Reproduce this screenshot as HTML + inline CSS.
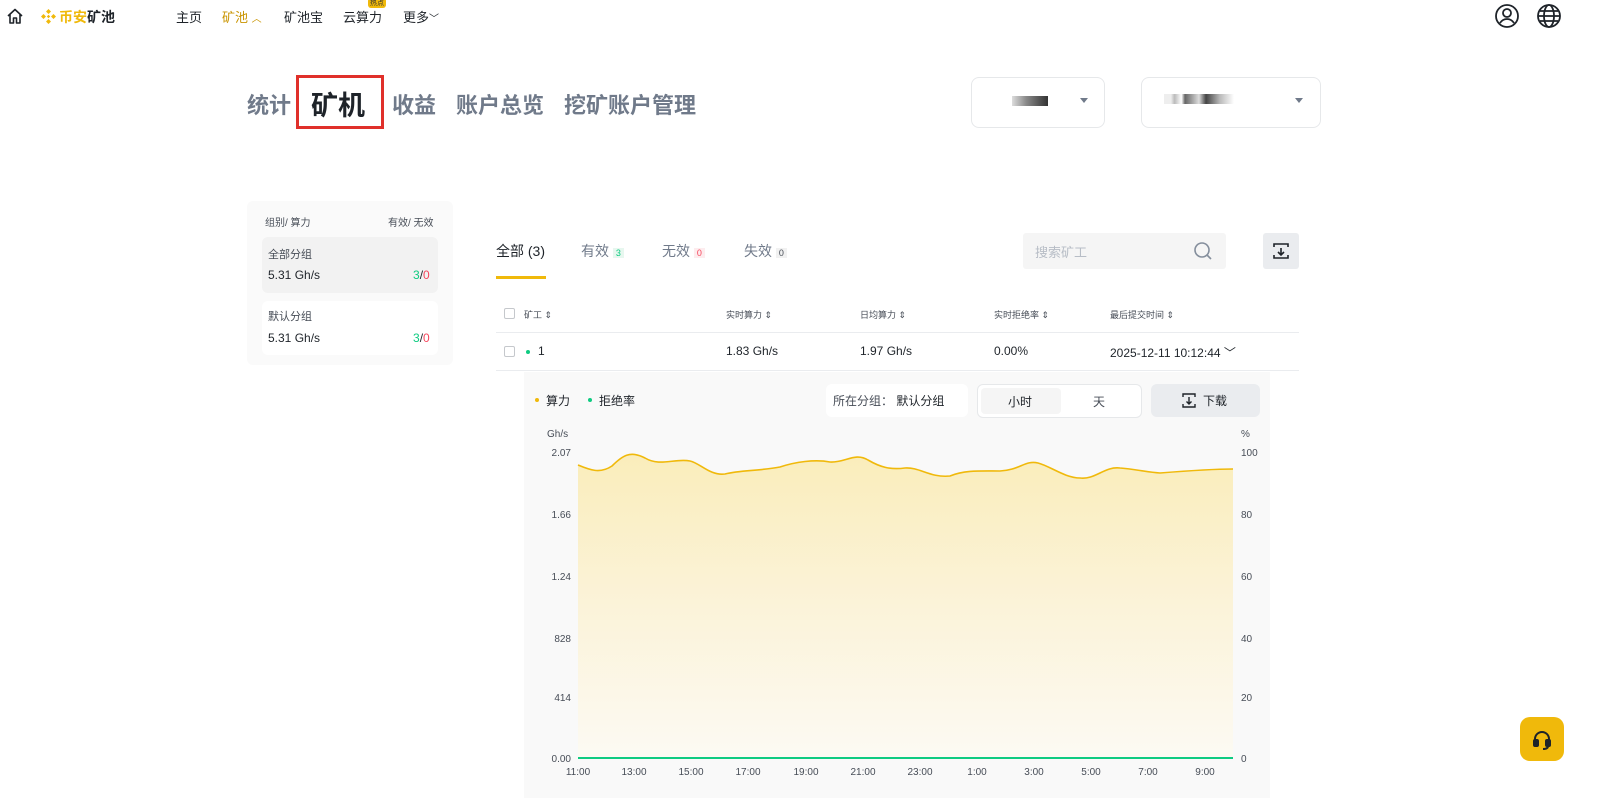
<!DOCTYPE html>
<html><head><meta charset="utf-8"><style>
*{margin:0;padding:0;box-sizing:border-box}
body{width:1600px;height:798px;overflow:hidden;background:#fff;font-family:"Liberation Sans","Noto Sans CJK SC",sans-serif;color:#1e2329;position:relative}
.a{position:absolute;white-space:nowrap}
.g{color:#0ecb81}.r{color:#f6465d}
</style></head><body>
<!-- nav -->
<svg class="a" style="left:6px;top:7px" width="18" height="18" viewBox="0 0 18 18"><path d="M2 9L9 2.5L16 9M4 7.5V16H7.5V11H10.5V16H14V7.5" fill="none" stroke="#1e2329" stroke-width="1.6" stroke-linejoin="round"/></svg>
<svg class="a" style="left:40px;top:8px" width="17" height="17" viewBox="0 0 17 17" fill="#f0b90b"><path d="M8.5 1L11 3.5 8.5 6 6 3.5zM8.5 11L11 13.5 8.5 16 6 13.5zM1 8.5L3.5 6 6 8.5 3.5 11zM11 8.5L13.5 6 16 8.5 13.5 11zM8.5 6.8L10.2 8.5 8.5 10.2 6.8 8.5z"/></svg>
<div class="a" style="left:59px;top:7px;font-size:14px;font-weight:700"><span style="color:#f0b90b">币安</span>矿池</div>
<div class="a" style="left:176px;top:7px;font-size:13px">主页</div>
<div class="a" style="left:222px;top:7px;font-size:13px;color:#c99400">矿池 <span style="font-size:10px">︿</span></div>
<div class="a" style="left:284px;top:7px;font-size:13px">矿池宝</div>
<div class="a" style="left:343px;top:7px;font-size:13px">云算力</div>
<div class="a" style="left:368px;top:-2px;font-size:7px;background:#f0b90b;color:#333;border-radius:3px;padding:0 2px">热点</div>
<div class="a" style="left:403px;top:7px;font-size:13px">更多<span style="font-size:10px">﹀</span></div>
<svg class="a" style="left:1494px;top:3px" width="26" height="26" viewBox="0 0 26 26" fill="none" stroke="#1e2329" stroke-width="1.8"><circle cx="13" cy="13" r="11"/><circle cx="13" cy="10" r="4"/><path d="M6 20c2-3 4-4 7-4s5 1 7 4"/></svg>
<svg class="a" style="left:1536px;top:3px" width="26" height="26" viewBox="0 0 26 26" fill="none" stroke="#1e2329" stroke-width="1.8"><circle cx="13" cy="13" r="11"/><ellipse cx="13" cy="13" rx="5" ry="11"/><path d="M2 13h22M4 8h18M4 18h18"/></svg>
<!-- title tabs -->
<div class="a" style="left:247px;top:88px;font-size:22px;font-weight:700;color:#707a8a">统计</div>
<div class="a" style="left:296px;top:75px;width:88px;height:54px;border:3px solid #e0302a"></div>
<div class="a" style="left:311px;top:84px;font-size:27px;font-weight:700;color:#1e2329">矿机</div>
<div class="a" style="left:392px;top:88px;font-size:22px;font-weight:700;color:#707a8a">收益</div>
<div class="a" style="left:456px;top:88px;font-size:22px;font-weight:700;color:#707a8a">账户总览</div>
<div class="a" style="left:564px;top:88px;font-size:22px;font-weight:700;color:#707a8a">挖矿账户管理</div>
<div class="a" style="left:971px;top:77px;width:134px;height:51px;border:1px solid #e6e8ea;border-radius:8px"><div class="a" style="left:40px;top:18px;width:36px;height:10px;background:linear-gradient(90deg,#ddd,#888 40%,#333)"></div><div class="a" style="left:108px;top:20px;border:4px solid transparent;border-top:5px solid #707a8a"></div></div>
<div class="a" style="left:1141px;top:77px;width:180px;height:51px;border:1px solid #e6e8ea;border-radius:8px"><div class="a" style="left:22px;top:16px;width:70px;height:10px;background:linear-gradient(90deg,#eee 10%,#bbb 15%,#fff 25%,#666 30%,#ddd 50%,#444 60%,#bbb 80%,#fff)"></div><div class="a" style="left:153px;top:20px;border:4px solid transparent;border-top:5px solid #707a8a"></div></div>
<!-- left panel -->
<div class="a" style="left:247px;top:201px;width:206px;height:164px;background:#fafafa;border-radius:6px"></div>
<div class="a" style="left:265px;top:214px;font-size:10px;color:#474d57">组别/ 算力</div>
<div class="a" style="left:388px;top:214px;font-size:10px;color:#474d57">有效/ 无效</div>
<div class="a" style="left:262px;top:237px;width:176px;height:56px;background:#f2f2f2;border-radius:6px"></div>
<div class="a" style="left:268px;top:246px;font-size:11px;color:#474d57">全部分组</div>
<div class="a" style="left:268px;top:268px;font-size:12px">5.31 Gh/s</div>
<div class="a" style="left:413px;top:268px;font-size:12px"><span class="g">3</span>/<span class="r">0</span></div>
<div class="a" style="left:262px;top:301px;width:176px;height:54px;background:#fff;border-radius:6px"></div>
<div class="a" style="left:268px;top:308px;font-size:11px;color:#474d57">默认分组</div>
<div class="a" style="left:268px;top:331px;font-size:12px">5.31 Gh/s</div>
<div class="a" style="left:413px;top:331px;font-size:12px"><span class="g">3</span>/<span class="r">0</span></div>
<!-- status tabs -->
<div class="a" style="left:496px;top:241px;font-size:14px">全部 (3)</div>
<div class="a" style="left:496px;top:276px;width:50px;height:3px;background:#f0b90b"></div>
<div class="a" style="left:581px;top:241px;font-size:14px;color:#707a8a">有效 <span style="font-size:9px;background:#e7f7ef;color:#0ecb81;padding:0 3px">3</span></div>
<div class="a" style="left:662px;top:241px;font-size:14px;color:#707a8a">无效 <span style="font-size:9px;background:#fdecee;color:#f6465d;padding:0 3px">0</span></div>
<div class="a" style="left:744px;top:241px;font-size:14px;color:#707a8a">失效 <span style="font-size:9px;background:#f1f1f1;color:#474d57;padding:0 3px">0</span></div>
<div class="a" style="left:1023px;top:233px;width:203px;height:36px;background:#f5f5f5;border-radius:3px"><div class="a" style="left:12px;top:9px;font-size:13px;color:#b7bdc6">搜索矿工</div><svg class="a" style="left:170px;top:8px" width="20" height="20" fill="none" stroke="#848e9c" stroke-width="1.6"><circle cx="9" cy="9" r="7"/><path d="M14 14l4 4"/></svg></div>
<div class="a" style="left:1263px;top:233px;width:36px;height:36px;background:#eaecef;border-radius:3px"><svg class="a" style="left:9px;top:9px" width="18" height="18" fill="none" stroke="#1e2329" stroke-width="1.6"><path d="M2 5V2h14v3M2 13v3h14v-3M9 6v7M6 10l3 3 3-3"/></svg></div>
<!-- table -->
<div class="a" style="left:504px;top:308px;width:11px;height:11px;border:1px solid #c5c8cc;border-radius:2px"></div>
<div class="a" style="left:524px;top:308px;font-size:9px;color:#474d57">矿工 ⇕</div>
<div class="a" style="left:726px;top:308px;font-size:9px;color:#474d57">实时算力 ⇕</div>
<div class="a" style="left:860px;top:308px;font-size:9px;color:#474d57">日均算力 ⇕</div>
<div class="a" style="left:994px;top:308px;font-size:9px;color:#474d57">实时拒绝率 ⇕</div>
<div class="a" style="left:1110px;top:308px;font-size:9px;color:#474d57">最后提交时间 ⇕</div>
<div class="a" style="left:496px;top:332px;width:803px;height:1px;background:#eaecef"></div>
<div class="a" style="left:504px;top:346px;width:11px;height:11px;border:1px solid #c5c8cc;border-radius:2px"></div>
<div class="a" style="left:526px;top:350px;width:4px;height:4px;border-radius:50%;background:#0ecb81"></div>
<div class="a" style="left:538px;top:344px;font-size:12px">1</div>
<div class="a" style="left:726px;top:344px;font-size:12px">1.83 Gh/s</div>
<div class="a" style="left:860px;top:344px;font-size:12px">1.97 Gh/s</div>
<div class="a" style="left:994px;top:344px;font-size:12px">0.00%</div>
<div class="a" style="left:1110px;top:344px;font-size:12px">2025-12-11 10:12:44 ﹀</div>
<div class="a" style="left:496px;top:370px;width:803px;height:1px;background:#eaecef"></div>
<!-- chart panel -->
<div class="a" style="left:524px;top:372px;width:746px;height:426px;background:#f9f9f9"></div>
<div class="a" style="left:535px;top:398px;width:4px;height:4px;border-radius:50%;background:#f0b90b"></div>
<div class="a" style="left:546px;top:392px;font-size:12px">算力</div>
<div class="a" style="left:588px;top:398px;width:4px;height:4px;border-radius:50%;background:#0ecb81"></div>
<div class="a" style="left:599px;top:392px;font-size:12px">拒绝率</div>
<div class="a" style="left:826px;top:384px;width:142px;height:33px;background:#fff;border-radius:6px"><div class="a" style="left:7px;top:8px;font-size:12px;color:#474d57">所在分组：  <span style="color:#1e2329">默认分组</span></div></div>
<div class="a" style="left:977px;top:384px;width:165px;height:34px;border:1px solid #e6e8ea;border-radius:6px;background:#fff"><div class="a" style="left:3px;top:3px;width:80px;height:26px;background:#f5f5f5;border-radius:4px"></div><div class="a" style="left:30px;top:8px;font-size:12px">小时</div><div class="a" style="left:115px;top:8px;font-size:12px;color:#474d57">天</div></div>
<div class="a" style="left:1151px;top:384px;width:109px;height:33px;background:#eaecef;border-radius:6px"><svg class="a" style="left:31px;top:9px" width="14" height="15" fill="none" stroke="#1e2329" stroke-width="1.4"><path d="M1 4V1h12v3M1 11v3h12v-3M7 4v7M4.5 8.5L7 11l2.5-2.5"/></svg><div class="a" style="left:52px;top:8px;font-size:12px">下载</div></div>
<svg class="a" style="left:524px;top:420px" width="746" height="378" viewBox="524 420 746 378">
<defs><linearGradient id="f" x1="0" y1="0" x2="0" y2="1"><stop offset="0" stop-color="#faedbb"/><stop offset="0.5" stop-color="#fbf3d9"/><stop offset="1" stop-color="#fcfaf3"/></linearGradient></defs>
<g font-family="Liberation Sans" font-size="10" fill="#474d57">
<text x="547" y="437">Gh/s</text><text x="1241" y="437">%</text>
<text x="571" y="456" text-anchor="end">2.07</text><text x="571" y="518" text-anchor="end">1.66</text><text x="571" y="580" text-anchor="end">1.24</text><text x="571" y="642" text-anchor="end">828</text><text x="571" y="701" text-anchor="end">414</text><text x="571" y="762" text-anchor="end">0.00</text>
<text x="1241" y="456">100</text><text x="1241" y="518">80</text><text x="1241" y="580">60</text><text x="1241" y="642">40</text><text x="1241" y="701">20</text><text x="1241" y="762">0</text>
<g text-anchor="middle"><text x="578" y="775">11:00</text><text x="634" y="775">13:00</text><text x="691" y="775">15:00</text><text x="748" y="775">17:00</text><text x="806" y="775">19:00</text><text x="863" y="775">21:00</text><text x="920" y="775">23:00</text><text x="977" y="775">1:00</text><text x="1034" y="775">3:00</text><text x="1091" y="775">5:00</text><text x="1148" y="775">7:00</text><text x="1205" y="775">9:00</text></g></g>
<path d="M578 465C590 470 600 474 612 466C622 456 630 450 645 458C660 467 675 458 690 461C700 463 710 476 725 474C740 470 760 471 780 467C795 462 815 459 830 462C845 463 855 452 868 460C880 467 890 470 905 468C920 467 930 478 950 476C965 470 980 471 1000 471C1020 470 1025 460 1038 463C1050 466 1065 478 1080 478C1095 480 1105 466 1120 468C1135 469 1145 472 1160 473C1185 471 1210 469 1233 469V758H578Z" fill="url(#f)"/>
<path d="M578 465C590 470 600 474 612 466C622 456 630 450 645 458C660 467 675 458 690 461C700 463 710 476 725 474C740 470 760 471 780 467C795 462 815 459 830 462C845 463 855 452 868 460C880 467 890 470 905 468C920 467 930 478 950 476C965 470 980 471 1000 471C1020 470 1025 460 1038 463C1050 466 1065 478 1080 478C1095 480 1105 466 1120 468C1135 469 1145 472 1160 473C1185 471 1210 469 1233 469" fill="none" stroke="#f0b90b" stroke-width="1.6"/>
<path d="M578 758H1233" stroke="#0ecb81" stroke-width="2"/>
</svg>
<div class="a" style="left:1520px;top:717px;width:44px;height:44px;background:#f0b90b;border-radius:10px"><svg class="a" style="left:11px;top:11px" width="22" height="22" fill="none" stroke="#1e2329" stroke-width="2"><path d="M4 13V11a7 7 0 0114 0v2"/><rect x="3" y="12" width="4" height="6" rx="1" fill="#1e2329"/><rect x="15" y="12" width="4" height="6" rx="1" fill="#1e2329"/><path d="M17 18c0 2-2 3-5 3"/></svg></div>
</body></html>
